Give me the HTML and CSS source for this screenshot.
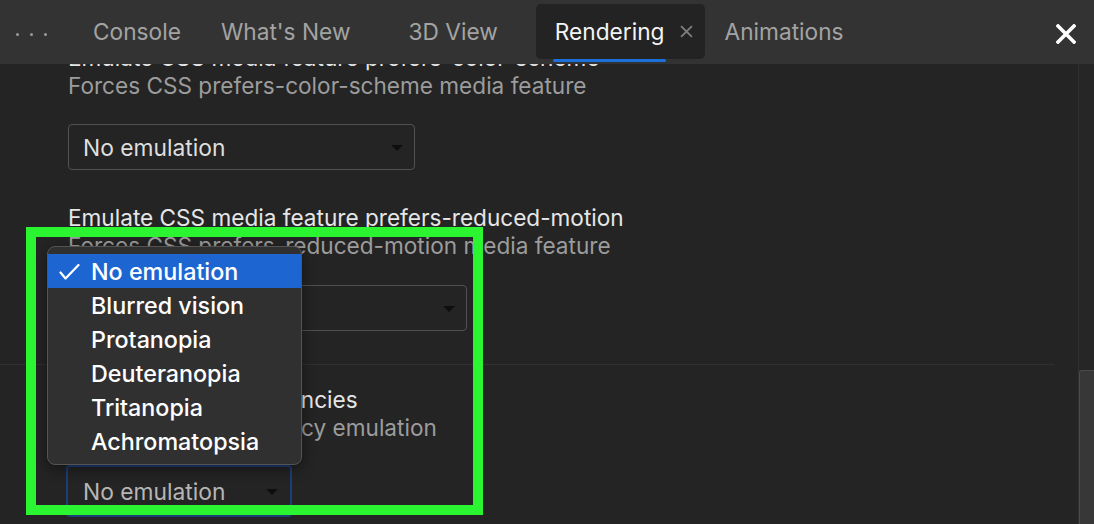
FILE: index.html
```html
<!DOCTYPE html>
<html lang="en">
<head>
<meta charset="utf-8">
<title>DevTools Rendering</title>
<link rel="stylesheet" href="styles.css">
</head>
<body>
<div class="devtools">
  <div class="tabbar">
    <div class="more"><span class="dot"></span><span class="dot"></span><span class="dot"></span></div>
    <div class="tab"><span class="tab-title">Console</span></div>
    <div class="tab tab--closeable"><span class="tab-title">What's New</span><span class="tab-close"></span></div>
    <div class="tab tab--closeable"><span class="tab-title">3D View</span><span class="tab-close"></span></div>
    <div class="tab tab--closeable tab--active"><span class="tab-title">Rendering</span><span class="tab-close"><svg viewBox="0 0 12 12" width="13" height="13"><path d="M1 1L11 11M11 1L1 11" stroke="#7c7c7c" stroke-width="1.8" fill="none"/></svg></span></div>
    <div class="tab tab--closeable"><span class="tab-title">Animations</span><span class="tab-close"></span></div>
    <div class="drawer-close"><svg viewBox="0 0 20 20" width="20" height="20"><path d="M2 2L18 18M18 2L2 18" stroke="#ffffff" stroke-width="3.6" fill="none" stroke-linecap="square"/></svg></div>
  </div>
  <div class="main">
    <div class="panel">
      <div class="panel-inner">
        <section class="setting">
          <div class="setting-title">Emulate CSS media feature prefers-color-scheme</div>
          <div class="setting-desc">Forces CSS prefers-color-scheme media feature</div>
          <div class="select select--wide"><span>No emulation</span><span class="select-arrow"></span></div>
        </section>
        <section class="setting setting--gap">
          <div class="setting-title">Emulate CSS media feature prefers-reduced-motion</div>
          <div class="setting-desc">Forces CSS prefers-reduced-motion media feature</div>
          <div class="select select--wider"><span>No emulation</span><span class="select-arrow"></span></div>
        </section>
        <section class="setting setting--divided">
          <div class="setting-title">Emulate vision deficiencies</div>
          <div class="setting-desc">Forces vision deficiency emulation</div>
          <div class="select select--focused"><span>No emulation</span><span class="select-arrow"></span></div>
        </section>
      </div>
    </div>
    <div class="scrollbar"><div class="thumb"></div></div>
  </div>

  <div class="popup-menu">
    <div class="menu-item menu-item--selected"><svg class="check" viewBox="0 0 21 16" width="21" height="16"><path d="M1.5 8.5L6.5 14.5L19.5 1" stroke="#ffffff" stroke-width="2.2" fill="none" stroke-linecap="round" stroke-linejoin="round"/></svg>No emulation</div>
    <div class="menu-item">Blurred vision</div>
    <div class="menu-item">Protanopia</div>
    <div class="menu-item">Deuteranopia</div>
    <div class="menu-item">Tritanopia</div>
    <div class="menu-item">Achromatopsia</div>
  </div>

  <div class="highlight-box"></div>
</div>
</body>
</html>
```

FILE: styles.css
```css
* { box-sizing: border-box; }

html, body {
  margin: 0;
  padding: 0;
}

body {
  width: 1094px;
  height: 524px;
  overflow: hidden;
  background: #242424;
  font-family: Inter, "Liberation Sans", sans-serif;
}

.devtools {
  position: relative;
  width: 1094px;
  height: 524px;
}

/* ---------- tab bar ---------- */
.tabbar {
  height: 64px;
  background: #333333;
  display: flex;
  align-items: flex-start;
}

.more {
  width: 73px;
  height: 64px;
  display: flex;
  align-items: center;
  gap: 11px;
  padding-left: 16px;
  padding-top: 4px;
}

.dot {
  width: 3px;
  height: 3px;
  border-radius: 50%;
  background: #9a9a9a;
}

.tab {
  position: relative;
  height: 55px;
  margin-top: 4px;
  display: flex;
  align-items: center;
  padding: 0 20px;
  font-size: 22.7px;
  color: #a3a3a3;
  border-radius: 5px;
  white-space: nowrap;
}

.tab--closeable {
  padding-right: 10px;
}

.tab-close {
  width: 14px;
  height: 14px;
  margin-left: 14px;
  display: flex;
  align-items: center;
  justify-content: center;
}

.tab--active {
  background: #232323;
  color: #f4f4f4;
  padding-left: 19px;
  padding-right: 11px;
}

.tab--active .tab-close {
  margin-left: 15px;
}

.tab--active .tab-title {
  position: relative;
}

.tab--active .tab-title::after {
  content: "";
  position: absolute;
  left: -2px;
  right: -1px;
  top: 41px;
  height: 3px;
  border-radius: 2px;
  background: #1b70dc;
}

.drawer-close {
  margin-left: auto;
  margin-right: 18px;
  height: 64px;
  display: flex;
  align-items: center;
  padding-top: 4px;
}

/* ---------- main ---------- */
.main {
  display: flex;
  height: 460px;
}

.panel {
  flex: 1;
  overflow: hidden;
}

.panel-inner {
  margin-top: -20px;
  padding-right: 24px;
}

.setting {
  padding-left: 68px;
}

.setting--gap {
  margin-top: 34px;
}

.setting--divided {
  margin-top: 33px;
  border-top: 1px solid #303030;
  padding-top: 21px;
}

.setting-title {
  font-size: 22.6px;
  line-height: 28px;
  color: #e6e6e6;
  white-space: nowrap;
}

.setting-desc {
  font-size: 22.6px;
  line-height: 28px;
  color: #9c9c9c;
  white-space: nowrap;
}

.select {
  margin-top: 24px;
  height: 46px;
  border: 1px solid #515151;
  border-radius: 4px;
  display: flex;
  align-items: center;
  justify-content: space-between;
  padding: 0 11px 0 14px;
  font-size: 22.8px;
  color: #dedede;
}

.select--wide { width: 347px; }
.select--wider { width: 399px; margin-top: 25px; }

.select--focused {
  width: 226px;
  height: 52px;
  margin-top: 23px;
  margin-left: -2px;
  border: 2px solid #1c3f78;
  padding: 0 12px 0 15px;
  color: #b6b6b6;
}

.select-arrow {
  width: 0;
  height: 0;
  border-left: 6px solid transparent;
  border-right: 6px solid transparent;
  border-top: 6px solid #0e0e0e;
  margin-top: 1px;
}

/* ---------- scrollbar ---------- */
.scrollbar {
  width: 16px;
  border-left: 1px solid #303030;
  background: #262626;
  display: flex;
  flex-direction: column;
}

.thumb {
  margin-top: 306px;
  flex: 1;
  background: #373737;
  border-top: 1px solid #4b4b4b;
  border-left: 1px solid #4b4b4b;
  border-radius: 3px 0 0 0;
}

/* ---------- native popup menu ---------- */
.popup-menu {
  position: absolute;
  left: 47px;
  top: 246px;
  width: 255px;
  height: 219px;
  padding: 7px 0;
  background: #303030;
  border: 1px solid #545454;
  border-radius: 8px;
  box-shadow: 0 4px 14px rgba(0, 0, 0, 0.45);
  overflow: hidden;
}

.menu-item {
  position: relative;
  height: 34px;
  display: flex;
  align-items: center;
  padding-left: 43px;
  font-size: 23.3px;
  font-weight: 500;
  color: #ffffff;
  white-space: nowrap;
}

.menu-item--selected {
  background: #1d66d2;
}

.check {
  position: absolute;
  left: 11px;
  top: 10px;
}

/* ---------- annotation ---------- */
.highlight-box {
  position: absolute;
  left: 26px;
  top: 227px;
  width: 457px;
  height: 288px;
  border: 10px solid #2bf530;
}
```
